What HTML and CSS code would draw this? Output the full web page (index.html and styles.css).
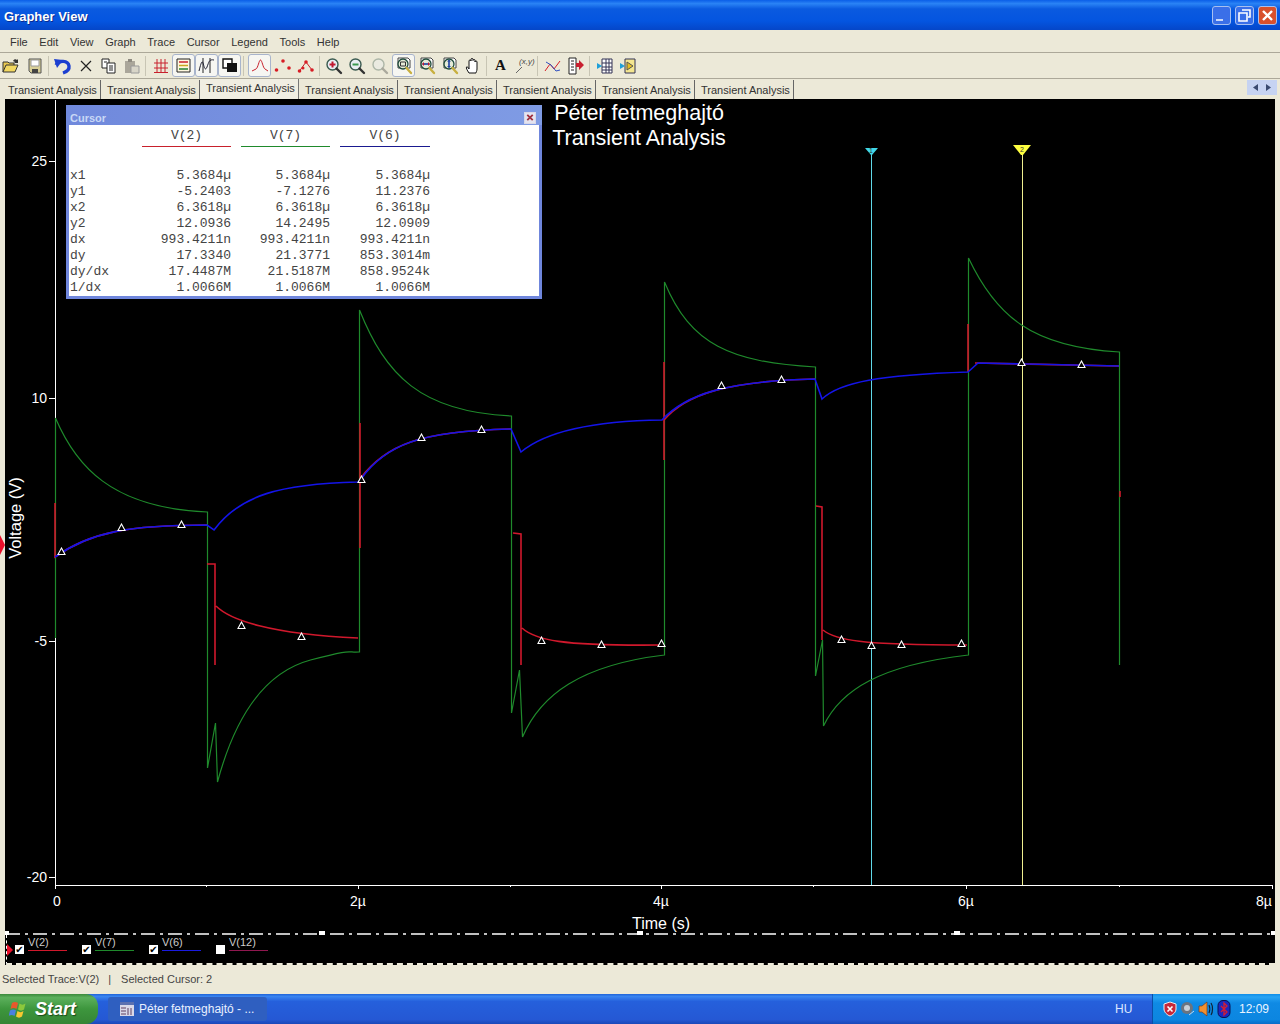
FILE: index.html
```html
<!DOCTYPE html>
<html lang="en">

<head>
    <meta charset="UTF-8">
    <title>Grapher View</title>
    <link rel="stylesheet" href="styles.css">
</head>

<body>
    <svg class="sprite" width="0" height="0">
        <symbol id="mag" viewBox="0 0 18 18">
            <circle cx="7.500" cy="7.500" r="5.500" fill="#e8eef4" stroke="#3a5a50" stroke-width="1.400" />
            <path d="M11.500 11.500l4.500 4.500" stroke="#333" stroke-width="2.400" stroke-linecap="round" />
        </symbol>
        <symbol id="magdoc" viewBox="0 0 18 18">
            <path d="M3 1h10l2 2v8H3z" fill="#fff" stroke="#444" />
            <circle cx="8" cy="7" r="5" fill="#e6ecd8" stroke="#1e4a3a" stroke-width="1.300" />
            <path d="M11.500 11l4.500 5" stroke="#c8b040" stroke-width="2.400" stroke-linecap="round" />
        </symbol>
        <symbol id="mark" viewBox="0 0 9 9">
            <path d="M4.500 1L8 7.500H1z" fill="#000" stroke="#fff" stroke-width="1.100" />
        </symbol>
    </svg>

    <div class="app">
        <div class="titlebar">
            <span class="title-text">Grapher View</span>
            <div class="title-buttons">
                <span class="wbtn"><svg width="19" height="19" viewBox="0 0 19 19"><path d="M4 13h7v2H4z" fill="#c8d8f8" /></svg></span>
                <span class="wbtn"><svg width="19" height="19" viewBox="0 0 19 19"><path d="M7 4h8v7h-2M4 7h8v8H4z" fill="none" stroke="#fff" stroke-width="1.600" /></svg></span>
                <span class="wbtn wbtn-close"><svg width="19" height="19" viewBox="0 0 19 19"><path d="M5 5l9 9M14 5l-9 9" stroke="#fff" stroke-width="2.400" /></svg></span>
            </div>
        </div>

        <div class="menubar">
            <span>File</span><span>Edit</span><span>View</span><span>Graph</span><span>Trace</span><span>Cursor</span><span>Legend</span><span>Tools</span><span>Help</span>
        </div>

        <div class="toolbar">
            <span class="tool tool-first"><svg width="18" height="18" viewBox="0 0 18 18"><path d="M1 15V5h5l1 1h5v2" fill="#e8c850" stroke="#333" /><path d="M1 15l3-7h12l-3 7z" fill="#f2d860" stroke="#333" /><path d="M11 4c1-2 3-2 4-1l1-1v4h-4l1-1c-.6-.6-1.300-.6-2-1z" fill="#333" /></svg></span>
            <span class="tool tool-save"><svg width="18" height="18" viewBox="0 0 18 18"><path d="M3 2h12v14H5l-2-2z" fill="#d8cf98" stroke="#555" /><path d="M5 3h8v6H5z" fill="#fff" stroke="#999" /><path d="M6 12h6v4H6z" fill="#444" /></svg></span>
            <span class="sep"></span>
            <span class="tool"><svg width="20" height="20" viewBox="0 0 20 20"><path d="M3 9c3-5 12-5 13 1 .6 4-3 6-6 7" fill="none" stroke="#1c3fd0" stroke-width="3.400" /><path d="M1 3l9 1-6 8z" fill="#1c3fd0" /></svg></span>
            <span class="tool"><svg width="16" height="16" viewBox="0 0 16 16"><path d="M3 3l10 10M13 3L3 13" stroke="#222" stroke-width="1.200" /></svg></span>
            <span class="tool"><svg width="18" height="18" viewBox="0 0 18 18"><path d="M2 2h7v9H2z" fill="#fff" stroke="#222" /><path d="M7 6h8v10H7z" fill="#fff" stroke="#222" /><path d="M9 9h4M9 11h4M9 13h4M4 5h3" stroke="#222" /></svg></span>
            <span class="tool"><svg width="18" height="18" viewBox="0 0 18 18"><path d="M2 4h10v12H2z" fill="#aaa69a" /><path d="M5 2h4v3H5z" fill="#8e8a80" /><path d="M8 9h8v7H8z" fill="#d8d5c8" stroke="#999" /></svg></span>
            <span class="sep sep-wide"></span>
            <span class="tool"><svg width="16" height="16" viewBox="0 0 16 16"><path d="M1 5h14M1 10h14M1 14.500h14M4 1v14M8 1v14M12 1v14" stroke="#c8202c" /></svg></span>
            <span class="tool tool-on"><svg width="17" height="17" viewBox="0 0 17 17"><path d="M2 2h13v13H2z" fill="#fff8e0" stroke="#222" /><path d="M4 5h9" stroke="#c8202c" stroke-width="1.500" /><path d="M4 8.500h9" stroke="#c8a820" stroke-width="1.500" /><path d="M4 12h9" stroke="#208030" stroke-width="1.500" /></svg></span>
            <span class="tool tool-on"><svg width="17" height="17" viewBox="0 0 17 17"><path d="M5 1v15M12 1v15" stroke="#222" /><path d="M1 14c2-8 3-11 4-8s2 9 4 4 2-8 7-7" fill="none" stroke="#223" /></svg></span>
            <span class="tool tool-on"><svg width="17" height="17" viewBox="0 0 17 17"><path d="M2 2h9v9H2z" fill="#fff" stroke="#111" stroke-width="1.400" /><path d="M6 6h10v9H6z" fill="#111" /></svg></span>
            <span class="sep sep-line"></span>
            <span class="tool tool-on"><svg width="18" height="18" viewBox="0 0 18 18"><path d="M1 14l4-2c2-1 3-9 4.500-9S12 11 14 12l3 2" fill="none" stroke="#c8202c" /></svg></span>
            <span class="tool"><svg width="18" height="18" viewBox="0 0 18 18"><g fill="#d81c24"><circle cx="2.500" cy="13" r="1.800" /><circle cx="9" cy="4" r="1.800" /><circle cx="15" cy="11" r="1.800" /></g></svg></span>
            <span class="tool"><svg width="18" height="18" viewBox="0 0 18 18"><path d="M2.500 14L9 5l6 8" fill="none" stroke="#c8202c" /><g fill="#d81c24"><circle cx="2.500" cy="14" r="1.800" /><circle cx="6" cy="11" r="1.500" /><circle cx="9" cy="5" r="1.800" /><circle cx="15" cy="13" r="1.800" /></g></svg></span>
            <span class="sep"></span>
            <span class="tool"><svg width="18" height="18" viewBox="0 0 18 18"><use href="#mag" /><path d="M4.500 7.500h6M7.500 4.500v6" stroke="#c01830" stroke-width="2" /></svg></span>
            <span class="tool"><svg width="18" height="18" viewBox="0 0 18 18"><use href="#mag" /><path d="M4.500 7.500h6" stroke="#3a9a50" stroke-width="2" /></svg></span>
            <span class="tool tool-dim"><svg width="18" height="18" viewBox="0 0 18 18"><use href="#mag" /></svg></span>
            <span class="tool tool-on tool-area"><svg width="18" height="18" viewBox="0 0 18 18"><use href="#magdoc" /><path d="M5.500 5h5v4h-5z" fill="none" stroke="#333" /></svg></span>
            <span class="tool"><svg width="18" height="18" viewBox="0 0 18 18"><use href="#magdoc" /><path d="M4.500 7h7" stroke="#1c3fa0" stroke-width="1.600" /><path d="M4 7l2-2v4zM12 7l-2-2v4z" fill="#c01830" /></svg></span>
            <span class="tool"><svg width="18" height="18" viewBox="0 0 18 18"><use href="#magdoc" /><path d="M8 3.500v7" stroke="#1c3fa0" stroke-width="1.600" /><path d="M8 2.500l-2 2h4zM8 11l-2-2h4z" fill="#1c3fa0" /></svg></span>
            <span class="tool"><svg width="18" height="18" viewBox="0 0 18 18"><path d="M5 16c-2-3-3-5-2.500-6s2 1 2.500 2V4c0-1.500 2-1.500 2 0V2.500c0-1.500 2-1.500 2 0V3.500c0-1.500 2-1.500 2 0V5c0-1.500 2-1.500 2 0v7c0 2-1 3-1 4z" fill="#fff" stroke="#111" /></svg></span>
            <span class="sep"></span>
            <span class="tool tool-letter">A</span>
            <span class="tool"><svg width="18" height="18" viewBox="0 0 18 18"><path d="M1 16l6-6" stroke="#666" /></svg><span class="xy-label">(x,y)</span></span>
            <span class="sep sep-wide"></span>
            <span class="tool"><svg width="18" height="18" viewBox="0 0 18 18"><path d="M1 14l5-7 4 5 6-8" fill="none" stroke="#d81c24" /><path d="M2 5l5 3 5 6 4-1" fill="none" stroke="#3050c0" /></svg></span>
            <span class="tool"><svg width="18" height="18" viewBox="0 0 18 18"><path d="M2 1h7v16H2z" fill="#fff" stroke="#222" /><path d="M4 4h3M4 7h3M4 10h3M4 13h3" stroke="#222" /><path d="M9 6h3V3l5 5-5 5v-3H9z" fill="#c82030" /></svg></span>
            <span class="sep sep-wide"></span>
            <span class="tool"><svg width="18" height="18" viewBox="0 0 18 18"><path d="M6 2h10v14H6z" fill="#fff" stroke="#335" /><path d="M6 6h10M6 10h10M6 13h10M10 2v14M13 2v14" stroke="#335" /><path d="M1 6l5 3-5 3z" fill="#20a0d8" /></svg></span>
            <span class="tool"><svg width="18" height="18" viewBox="0 0 18 18"><path d="M6 2h10v14H6z" fill="#f4e690" stroke="#335" /><path d="M8 5l6 4-6 4z" fill="#e8c020" stroke="#555" /><path d="M1 6l5 3-5 3z" fill="#20a0d8" /></svg></span>
        </div>

        <div class="tabbar">
            <div class="tabs">
                <span class="tab">Transient Analysis</span>
                <span class="tab">Transient Analysis</span>
                <span class="tab tab-active">Transient Analysis</span>
                <span class="tab">Transient Analysis</span>
                <span class="tab">Transient Analysis</span>
                <span class="tab">Transient Analysis</span>
                <span class="tab">Transient Analysis</span>
                <span class="tab">Transient Analysis</span>
            </div>
            <div class="tab-arrows">
                <svg width="30" height="15" viewBox="0 0 30 15"><path d="M11 4v7L6 7.500zM19 4v7l5-3.500z" fill="#3a4a70" /></svg>
            </div>
        </div>

        <div class="graph">
            <span class="selected-arrow"></span>

            <svg class="plot" width="1270" height="836" viewBox="5 99 1270 836">
                <path d="M55 100V885H1272V889M55 161h-6M55 398h-6M55 641h-6M55 877h-6M55 885v4M206 885v2M358 885v4M510 885v2M661 885v4M813 885v2M966 885v4M1119 885v2" class="axis" />

                <g class="axis-label">
                    <text x="47" y="166" text-anchor="end">25</text>
                    <text x="47" y="403" text-anchor="end">10</text>
                    <text x="47" y="646" text-anchor="end">-5</text>
                    <text x="47" y="882" text-anchor="end">-20</text>
                    <text x="57" y="906" text-anchor="middle">0</text>
                    <text x="358" y="906" text-anchor="middle">2µ</text>
                    <text x="661" y="906" text-anchor="middle">4µ</text>
                    <text x="966" y="906" text-anchor="middle">6µ</text>
                    <text x="1264" y="906" text-anchor="middle">8µ</text>
                </g>
                <text class="axis-name" x="661" y="929" text-anchor="middle">Time (s)</text>
                <text class="axis-name axis-name-y" transform="translate(21 518) rotate(-90)" text-anchor="middle">Voltage (V)</text>

                <text class="plot-title" x="639" y="120" text-anchor="middle">Péter fetmeghajtó</text>
                <text class="plot-title" x="639" y="145" text-anchor="middle">Transient Analysis</text>

                <!-- kurzorok -->
                <path d="M871 152V885" class="cursor-one" />
                <path d="M1022 152V885" class="cursor-two" />
                <path d="M865 148h13l-6 7h-1z" fill="#40d8e8" />
                <path d="M1013 145h18l-8 10h-2z" fill="#ffff40" />
                <text class="flag-num" x="871" y="153" text-anchor="middle">1</text>
                <text class="flag-num" x="1022" y="152" text-anchor="middle">2</text>

                <!-- V(7) -->
                <path class="trace-green" d="M55 638V418C75 465 110 508 207 512V768L215 723L217 782C235 715 265 672 310 660S345 653 359 652V310C385 375 420 412 511 416V713L519 670L522 737C540 695 580 665 664 655V282C690 345 730 362 815 367V676L822 640L823 726C840 690 880 665 968 655V258C995 315 1030 347 1119 352V665" />
                <!-- V(2) -->
                <path class="trace-red" d="M55 503V557C90 532 130 525 207 525M207 564H215V665M216 606C230 620 270 634 358 638M360 423V548M360 479C385 445 420 431 511 429M513 533L521 534V665M522 628C535 640 560 646 662 645M664 362V460M664 420C685 395 725 381 815 379M816 506L822 507V640M823 630C835 640 860 645 967 645M968 324V372M975 363L1119 366M1120 491V497" />
                <!-- V(6) -->
                <path class="trace-blue" d="M55 557C90 532 130 525 207 525L214 530C240 495 280 484 358 482L361 479C385 445 420 431 511 429L521 452C545 432 590 421 662 420C685 395 725 381 815 379L822 399C840 382 880 375 968 372L978 363L1119 366" />

                <g>
                    <use href="#mark" x="57" y="547" width="9" height="9" />
                    <use href="#mark" x="117" y="523" width="9" height="9" />
                    <use href="#mark" x="177" y="520" width="9" height="9" />
                    <use href="#mark" x="237" y="621" width="9" height="9" />
                    <use href="#mark" x="297" y="632" width="9" height="9" />
                    <use href="#mark" x="357" y="475" width="9" height="9" />
                    <use href="#mark" x="417" y="433" width="9" height="9" />
                    <use href="#mark" x="477" y="425" width="9" height="9" />
                    <use href="#mark" x="537" y="636" width="9" height="9" />
                    <use href="#mark" x="597" y="640" width="9" height="9" />
                    <use href="#mark" x="657" y="639" width="9" height="9" />
                    <use href="#mark" x="717" y="381" width="9" height="9" />
                    <use href="#mark" x="777" y="375" width="9" height="9" />
                    <use href="#mark" x="837" y="635" width="9" height="9" />
                    <use href="#mark" x="867" y="641" width="9" height="9" />
                    <use href="#mark" x="897" y="640" width="9" height="9" />
                    <use href="#mark" x="957" y="639" width="9" height="9" />
                    <use href="#mark" x="1017" y="358" width="9" height="9" />
                    <use href="#mark" x="1077" y="360" width="9" height="9" />
                </g>

                <path d="M6 934H1272" class="dash-line" />
                <path d="M319 931h6v5h-6zM637 931h6v5h-6zM954 931h6v5h-6zM5 931h4v5H5zM1271 931h4v5h-4z" fill="#fff" />
            </svg>

            <div class="legend">
                <span class="legend-pointer"></span>
                <div class="legend-item legend-red"><span class="check">✔</span><span class="legend-name">V(2)</span></div>
                <div class="legend-item legend-green"><span class="check">✔</span><span class="legend-name">V(7)</span></div>
                <div class="legend-item legend-blue"><span class="check">✔</span><span class="legend-name">V(6)</span></div>
                <div class="legend-item legend-purple"><span class="check"></span><span class="legend-name">V(12)</span></div>
            </div>

            <div class="cursor-win">
                <div class="cursor-title">
                    <span>Cursor</span>
                    <span class="cursor-close"><svg width="11" height="11" viewBox="0 0 11 11"><path d="M2.500 2.500l6 6M8.500 2.500l-6 6" stroke="#a03040" stroke-width="2" /></svg></span>
                </div>
                <div class="cursor-table">
                    <span></span><span class="col-head head-red">V(2)</span><span class="col-head head-green">V(7)</span><span class="col-head head-blue">V(6)</span>
                    <span class="spacer"></span>
                    <span class="row-name">x1</span><span>5.3684µ</span><span>5.3684µ</span><span>5.3684µ</span>
                    <span class="row-name">y1</span><span>-5.2403</span><span>-7.1276</span><span>11.2376</span>
                    <span class="row-name">x2</span><span>6.3618µ</span><span>6.3618µ</span><span>6.3618µ</span>
                    <span class="row-name">y2</span><span>12.0936</span><span>14.2495</span><span>12.0909</span>
                    <span class="row-name">dx</span><span>993.4211n</span><span>993.4211n</span><span>993.4211n</span>
                    <span class="row-name">dy</span><span>17.3340</span><span>21.3771</span><span>853.3014m</span>
                    <span class="row-name">dy/dx</span><span>17.4487M</span><span>21.5187M</span><span>858.9524k</span>
                    <span class="row-name">1/dx</span><span>1.0066M</span><span>1.0066M</span><span>1.0066M</span>
                </div>
            </div>
        </div>

        <div class="statusbar">
            <span>Selected Trace:V(2)</span>
            <span class="status-sep">|</span>
            <span>Selected Cursor: 2</span>
        </div>

        <div class="taskbar">
            <div class="start-btn">
                <svg width="22" height="22" viewBox="0 0 22 22">
                    <path d="M3 5c2-1.500 4-1.500 6 0l-1.500 6c-2-1.500-4-1.500-6 0z" fill="#e8582c" />
                    <path d="M10.500 5.500c2 1.500 4 1.500 6 0l-1.500 6c-2 1.500-4 1.500-6 0z" fill="#8cc83c" />
                    <path d="M1 12.500c2-1.500 4-1.500 6 0L5.500 18c-2-1.500-4-1.500-6 0z" fill="#4a80e0" />
                    <path d="M8.500 13c2 1.500 4 1.500 6 0L13 18.500c-2 1.500-4 1.500-6 0z" fill="#f8c830" />
                </svg>
                <span>Start</span>
            </div>
            <div class="task-btn">
                <svg width="16" height="16" viewBox="0 0 16 16"><path d="M1 1h14v14H1z" fill="#d8d8e8" /><path d="M1 1h14v3H1z" fill="#5a70b0" /><path d="M2 7h5M2 10h5M2 13h5M9 7v7M12 7v7" stroke="#604060" /></svg>
                <span>Péter fetmeghajtó - ...</span>
            </div>
            <span class="lang">HU</span>
            <div class="tray">
                <svg width="16" height="16" viewBox="0 0 16 16"><path d="M8 1l6 2v5c0 3-3 6-6 7-3-1-6-4-6-7V3z" fill="#c82838" stroke="#eee" /><path d="M5.500 5.500l5 5M10.500 5.500l-5 5" stroke="#fff" stroke-width="1.600" /></svg>
                <svg width="16" height="16" viewBox="0 0 16 16"><circle cx="7" cy="7" r="6" fill="#6a7480" /><circle cx="7" cy="7" r="3" fill="#c8d0d8" /><path d="M9 14l5-4" stroke="#c8d8e8" /></svg>
                <svg width="16" height="16" viewBox="0 0 16 16"><path d="M1 5h3l5-4v14l-5-4H1z" fill="#f09030" stroke="#703010" stroke-width=".6" /><path d="M11 4c1 2 1 6 0 8M13 2c2 3 2 9 0 12" fill="none" stroke="#123" stroke-width="1.200" /></svg>
                <svg width="16" height="18" viewBox="0 0 16 18"><rect x="2" y="0.500" width="12" height="17" rx="5" fill="#1a28c0" stroke="#0a1050" /><path d="M5 6l6 6-3 3V3l3 3-6 6" fill="none" stroke="#d81c30" stroke-width="1.300" /></svg>
                <span class="clock">12:09</span>
            </div>
        </div>
    </div>
</body>

</html>
```

FILE: styles.css
```css
* {
    margin: 0;
    padding: 0;
    box-sizing: border-box;
}

body {
    width: 1280px;
    height: 1024px;
    overflow: hidden;
    background: #ece9d8;
    font-family: "Liberation Sans", Arial, sans-serif;
    font-size: 11px;
    color: #222;
}

.sprite {
    position: absolute;
}

.app {
    display: flex;
    flex-direction: column;
    height: 1024px;
}

/* title bar */
.titlebar {
    height: 30px;
    display: flex;
    align-items: center;
    justify-content: space-between;
    padding: 0 3px 0 4px;
    background: linear-gradient(#0a5ee8 0%, #2a83f5 12%, #0a5ae0 30%, #0455e0 70%, #0546c8 100%);
}

.title-text {
    padding-top: 2px;
    color: #fff;
    font-size: 13px;
    font-weight: bold;
    text-shadow: 1px 1px 0 #0a2a90;
}

.title-buttons {
    display: flex;
    gap: 4px;
}

.wbtn {
    width: 19px;
    height: 19px;
    display: flex;
    background: #3a6fe8;
    border: 1px solid #a8c0f0;
    border-radius: 3px;
    overflow: hidden;
}

.wbtn svg {
    flex: none;
    margin: -1px;
}

.wbtn-close {
    background: #d8502c;
}

/* menu */
.menubar {
    height: 23px;
    display: flex;
    align-items: center;
    padding: 2px 0 0 10px;
    gap: 11.6px;
    border-bottom: 1px solid #aca899;
    font-size: 11px;
    color: #333;
}

/* toolbar */
.toolbar {
    height: 26px;
    display: flex;
    align-items: center;
    border-bottom: 1px solid #aca899;
}

.tool {
    position: relative;
    width: 23px;
    height: 23px;
    flex: none;
    display: flex;
    align-items: center;
    justify-content: center;
}

.tool-first {
    width: 21px;
}

.tool-save {
    margin-left: 2px;
}

.tool-on {
    background: #f6f6f2;
    border: 1px solid #a8b4cc;
    border-radius: 3px;
}

.tool-area {
    margin-left: 1px;
}

.tool-dim {
    opacity: 0.35;
}

.tool-letter {
    font-family: "Liberation Serif", serif;
    font-weight: bold;
    font-size: 15px;
    color: #111;
}

.xy-label {
    position: absolute;
    top: 3px;
    left: 7px;
    font-size: 8px;
    font-style: italic;
    color: #444;
}

.sep {
    width: 5px;
    height: 20px;
    flex: none;
    position: relative;
}

.sep::after {
    content: "";
    position: absolute;
    left: 2px;
    top: 0;
    bottom: 0;
    width: 1px;
    background: #c8c5b4;
}

.sep-wide {
    width: 6px;
}

.sep-line {
    width: 7px;
}

/* tabs */
.tabbar {
    height: 20px;
    display: flex;
    justify-content: space-between;
    padding: 0 3px 0 2px;
}

.tabs {
    display: flex;
}

.tab {
    width: 99px;
    padding: 4px 0 0 6px;
    height: 19px;
    margin-top: 1px;
    border-right: 1px solid #666;
    color: #333;
    white-space: nowrap;
}

.tab-active {
    padding-top: 3px;
    margin-top: 0;
    height: 20px;
    background: #f0eee2;
    border-right: 1px solid #777;
}

.tab-arrows {
    width: 30px;
    height: 15px;
    margin-top: 1px;
    background: #c6d3f2;
}

/* graph */
.graph {
    position: relative;
    width: 1270px;
    height: 866px;
    margin: 0 5px;
    background: #000;
}

.plot {
    display: block;
}

.axis {
    fill: none;
    stroke: #fff;
    stroke-width: 1;
    shape-rendering: crispEdges;
}

.axis-label text {
    fill: #fff;
    font-size: 14px;
}

.axis-name {
    fill: #fff;
    font-size: 16px;
}

.axis-name-y {
    font-size: 16.5px;
}

.plot-title {
    fill: #fff;
    font-size: 21.5px;
}

.cursor-one {
    stroke: #60d8e8;
    shape-rendering: crispEdges;
}

.cursor-two {
    stroke: #f0f090;
    shape-rendering: crispEdges;
}

.flag-num {
    font-size: 7px;
    fill: #333;
}

.trace-green {
    fill: none;
    stroke: #1f8a2c;
    stroke-width: 1.2;
    transform: translateX(0.5px);
}

.trace-red {
    fill: none;
    stroke: #d0182c;
    stroke-width: 1.6;
}

.trace-blue {
    fill: none;
    stroke: #1414e8;
    stroke-width: 1.6;
}

.dash-line {
    stroke: #fff;
    stroke-width: 1.5;
    stroke-dasharray: 14 5 3 5;
}

.selected-arrow {
    position: absolute;
    left: -5px;
    top: 436px;
    border-left: 5px solid #e8102c;
    border-top: 10px solid transparent;
    border-bottom: 10px solid transparent;
}

/* legend */
.legend {
    height: 30px;
    display: flex;
    padding: 1px 0 0 8px;
    border-bottom: 2px dashed #ece9d8;
    border-left: 1px dashed #fff;
    margin-left: 1px;
}

.legend-pointer {
    position: absolute;
    left: 2px;
    top: 845px;
    border-left: 6px solid #e8102c;
    border-top: 6px solid transparent;
    border-bottom: 6px solid transparent;
}

.legend-item {
    position: relative;
    width: 67px;
    flex: none;
    padding-left: 13px;
}

.check {
    position: absolute;
    left: 0;
    top: 9px;
    width: 9px;
    height: 9px;
    background: #fff;
    color: #000;
    font-size: 10px;
    font-weight: bold;
    line-height: 9px;
    text-align: center;
    font-family: "DejaVu Sans", sans-serif;
}

.legend-name {
    display: block;
    width: 39px;
    color: #ccc;
    font-size: 11px;
    line-height: 12px;
    height: 15px;
    border-bottom: 1px solid #d0182c;
}

.legend-green .legend-name {
    border-color: #1f8a2c;
}

.legend-blue .legend-name {
    border-color: #1a1ae0;
}

.legend-purple .legend-name {
    border-color: #901850;
}

/* floating cursor window */
.cursor-win {
    position: absolute;
    left: 61px;
    top: 6px;
    width: 476px;
    height: 194px;
    background: #fff;
    border: 3px solid #6f86dc;
    border-top: 0;
}

.cursor-title {
    height: 20px;
    margin: 0 -3px;
    padding: 5px 6px 0 4px;
    display: flex;
    align-items: center;
    justify-content: space-between;
    background: linear-gradient(90deg, #7089dc, #7f9be4);
    color: #c9d8f6;
    font-size: 11px;
    font-weight: bold;
}

.cursor-close {
    width: 12px;
    height: 12px;
    background: #e4e4f0;
    border: 1px solid #d8d8e8;
    display: flex;
    align-items: center;
    justify-content: center;
}

.cursor-table {
    display: grid;
    grid-template-columns: 62px 99px 99px 100px;
    grid-template-rows: 22px 21px;
    grid-auto-rows: 16px;
    padding-left: 1px;
    font-family: "Liberation Mono", "Courier New", monospace;
    font-size: 13px;
    line-height: 16px;
    color: #444;
    text-align: right;
    white-space: nowrap;
}

.row-name {
    text-align: left;
}

.col-head {
    margin-left: 10px;
    text-align: center;
    border-bottom: 1px solid #c8202c;
    line-height: 21px;
}

.head-green {
    border-color: #1f8a2c;
}

.head-blue {
    border-color: #1a1a90;
}

.spacer {
    grid-column: 1 / -1;
}

/* status */
.statusbar {
    height: 20px;
    margin-top: 4px;
    display: flex;
    align-items: center;
    padding-left: 2px;
    color: #444;
}

.status-sep {
    margin: 0 10px 0 9px;
}

/* taskbar */
.taskbar {
    height: 30px;
    margin-top: auto;
    display: flex;
    align-items: stretch;
    background: linear-gradient(#1f63d8 0%, #3a85f0 8%, #2560dc 25%, #2558d4 85%, #1a48b8 100%);
}

.start-btn {
    width: 98px;
    display: flex;
    align-items: center;
    gap: 4px;
    padding-left: 9px;
    background: linear-gradient(#3c8a3c 0%, #5cb05c 12%, #3d963d 50%, #358535 100%);
    border-radius: 0 12px 12px 0;
    color: #fff;
    font-size: 18px;
    font-weight: bold;
    font-style: italic;
    text-shadow: 1px 1px 1px #1a4a1a;
}

.task-btn {
    width: 159px;
    margin: 3px 0 3px 10px;
    display: flex;
    align-items: center;
    gap: 4px;
    padding-left: 11px;
    background: #2f5fc0;
    border-radius: 3px;
    color: #e8f0ff;
    font-size: 12px;
}

.lang {
    margin-left: auto;
    align-self: center;
    width: 37px;
    color: #dde8ff;
    font-size: 12px;
}

.tray {
    width: 128px;
    display: flex;
    align-items: center;
    padding-left: 9px;
    gap: 2px;
    background: linear-gradient(#0f8ee8 0%, #28a4f4 10%, #0f8ae4 30%, #0c86e0 85%, #0a6cc8 100%);
    border-left: 1px solid #0a4ea8;
}

.clock {
    margin-left: 5px;
    color: #eaf4ff;
    font-size: 12px;
}
```
